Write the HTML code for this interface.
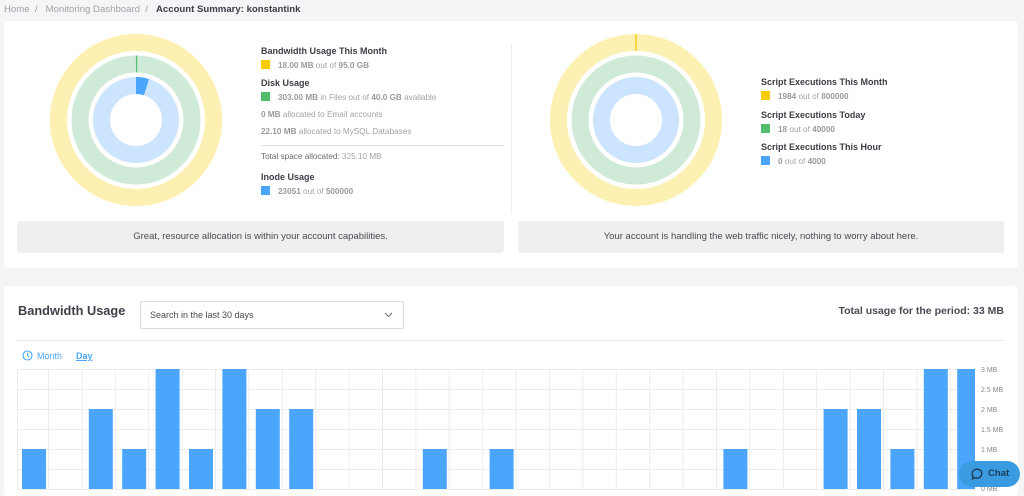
<!DOCTYPE html>
<html><head><style>
body{margin:0;width:1024px;height:492px;overflow:hidden;background:#f4f5f7;font-family:"Liberation Sans",sans-serif;position:relative;color:#3f3f4a}
.a{position:absolute;white-space:nowrap}
.card{position:absolute;background:#fff;border-radius:4px}
.t{font-size:9px;font-weight:bold;color:#3c3c46}
.v{font-size:8.2px;color:#a3a3a8}
.v b{color:#9a9aa0}
.sq{display:inline-block;width:9px;height:9px;vertical-align:-1px;margin-right:8px}
.msg{position:absolute;background:#efefef;border-radius:3px;font-size:9.5px;color:#4a4a52;text-align:center;line-height:32px}
</style></head><body>
<div class="a" style="left:4px;top:4px;font-size:9.6px;color:#a0a0a6">Home &nbsp;/ &nbsp;&nbsp;Monitoring Dashboard &nbsp;/ &nbsp;&nbsp;<b style="color:#3c3c46">Account Summary: konstantink</b></div>
<div class="card" style="left:4px;top:21px;width:1014px;height:247px"></div>
<div class="a" style="left:511px;top:44px;width:1px;height:170px;background:#eee"></div>
<svg class="a" style="left:0;top:0" width="1024" height="270">
<g fill="none" stroke-width="17">
<circle cx="136" cy="120" r="77.5" stroke="#fdf0b3"/>
<circle cx="136" cy="120" r="56" stroke="#cfead6"/>
<circle cx="136" cy="120" r="34.5" stroke="#cce4fd"/>
<path d="M136 64 A56 56 0 0 1 137.2 64" stroke="#52bd6c" stroke-width="17"/>
<path d="M136 85.5 A34.5 34.5 0 0 1 146.5 87.1" stroke="#4ba6fb"/>
<circle cx="636" cy="120" r="77.5" stroke="#fdf0b3"/>
<circle cx="636" cy="120" r="56" stroke="#cfead6"/>
<circle cx="636" cy="120" r="34.5" stroke="#cce4fd"/>
</g>
<line x1="636" y1="34" x2="636" y2="51" stroke="#f5c800" stroke-width="1.2"/>
<line x1="261" y1="145.5" x2="504" y2="145.5" stroke="#ddd"/>
</svg>
<div class="a t" style="left:261px;top:46px">Bandwidth Usage This Month</div>
<div class="a v" style="left:261px;top:60px"><span class="sq" style="background:#f7cc00"></span><b>18.00 MB</b> out of <b>95.0 GB</b></div>
<div class="a t" style="left:261px;top:78px">Disk Usage</div>
<div class="a v" style="left:261px;top:92px"><span class="sq" style="background:#52bd6c"></span><b>303.00 MB</b> in Files out of <b>40.0 GB</b> available</div>
<div class="a v" style="left:261px;top:110px"><b>0 MB</b> allocated to Email accounts</div>
<div class="a v" style="left:261px;top:127px"><b>22.10 MB</b> allocated to MySQL Databases</div>
<div class="a v" style="left:261px;top:152px;color:#6a6a72">Total space allocated: <span style="color:#a3a3a8">325.10 MB</span></div>
<div class="a t" style="left:261px;top:172px">Inode Usage</div>
<div class="a v" style="left:261px;top:186px"><span class="sq" style="background:#4ba6fb"></span><b>23051</b> out of <b>500000</b></div>
<div class="a t" style="left:761px;top:77px">Script Executions This Month</div>
<div class="a v" style="left:761px;top:91px"><span class="sq" style="background:#f7cc00"></span><b>1984</b> out of <b>800000</b></div>
<div class="a t" style="left:761px;top:110px">Script Executions Today</div>
<div class="a v" style="left:761px;top:124px"><span class="sq" style="background:#52bd6c"></span><b>18</b> out of <b>40000</b></div>
<div class="a t" style="left:761px;top:142px">Script Executions This Hour</div>
<div class="a v" style="left:761px;top:156px"><span class="sq" style="background:#4ba6fb"></span><b>0</b> out of <b>4000</b></div>
<div class="msg" style="left:17px;top:221px;width:487px;height:32px">Great, resource allocation is within your account capabilities.</div>
<div class="msg" style="left:518px;top:221px;width:486px;height:32px">Your account is handling the web traffic nicely, nothing to worry about here.</div>

<div class="card" style="left:4px;top:286px;width:1014px;height:210px"></div>
<div class="a" style="left:18px;top:303px;font-size:12.8px;font-weight:bold;color:#3f3f4a">Bandwidth Usage</div>
<div class="a" style="left:140px;top:301px;width:262px;height:26px;border:1px solid #ddd;border-radius:2px;font-size:9px;color:#4a4a52;line-height:26px;text-indent:9px">Search in the last 30 days
<svg style="position:absolute;right:10px;top:10px" width="9" height="6"><path d="M1 1L4.5 4.5L8 1" fill="none" stroke="#777" stroke-width="1.1"/></svg></div>
<div class="a" style="right:20px;top:305px;font-size:10.5px;font-weight:bold;color:#4a4a55">Total usage for the period: 33 MB</div>
<div class="a" style="left:17px;top:340px;width:987px;height:1px;background:#e8e8e8"></div>
<svg class="a" style="left:22px;top:350px" width="11" height="11"><circle cx="5.5" cy="5.5" r="4.5" fill="none" stroke="#4ba6fb" stroke-width="1.1"/><path d="M5.5 3V5.8L7.2 6.8" fill="none" stroke="#4ba6fb" stroke-width="1.1"/></svg>
<div class="a" style="left:37px;top:351px;font-size:9px;color:#4ba6fb">Month</div>
<div class="a" style="left:76px;top:351px;font-size:9px;color:#4ba6fb;font-weight:bold;text-decoration:underline">Day</div>
<svg class="a" style="left:0;top:360px" width="1024" height="132">
<defs><clipPath id="c"><rect x="17" y="0" width="958" height="132"/></clipPath></defs>
<g stroke="#ececec" stroke-width="1" id="g"></g>
<g id="b" fill="#4ba6fb" clip-path="url(#c)"></g>
<g font-size="7" fill="#888" font-family="Liberation Sans">
<text x="981" y="12">3 MB</text><text x="981" y="32">2.5 MB</text><text x="981" y="52">2 MB</text><text x="981" y="72">1.5 MB</text><text x="981" y="92">1 MB</text><text x="981" y="131">0 MB</text>
</g>
</svg>
<div class="a" style="left:959px;top:461px;width:61px;height:26px;border-radius:13px;background:#3b9be0;color:#1d3a58;font-size:9.5px;font-weight:bold;line-height:26px">
<svg style="position:absolute;left:12px;top:7px" width="12" height="12"><path d="M6 1.2C3 1.2 1.2 3.2 1.2 5.6c0 1 .3 1.9.9 2.6L1.5 10.8 4.3 9.8c.5.2 1.1.3 1.7.3 3 0 4.8-2 4.8-4.5S9 1.2 6 1.2z" fill="none" stroke="#1d3a58" stroke-width="1.4"/></svg>
<span style="position:absolute;left:29px">Chat</span></div>
<script>
var g=document.getElementById('g'),b=document.getElementById('b'),s='';
for(var i=0;i<7;i++){var y=9.5+i*20;s+='<line x1="17" x2="975" y1="'+y+'" y2="'+y+'"/>';}
s+='<line y1="9" y2="130" x1="17.5" x2="17.5"/>';
for(var i=0;i<28;i++){var x=48.5+i*33.4;s+='<line y1="9" y2="130" x1="'+x+'" x2="'+x+'"/>';}
g.innerHTML=s;
var d={0:1,2:2,3:1,4:3,5:1,6:3,7:2,8:2,12:1,14:1,21:1,24:2,25:2,26:1,27:3,28:3},t='';
for(var k in d){var x=22+k*33.4,h=d[k]*40;t+='<rect x="'+x+'" y="'+(129-h)+'" width="24" height="'+h+'"/>';}
b.innerHTML=t;
</script>
</body></html>
